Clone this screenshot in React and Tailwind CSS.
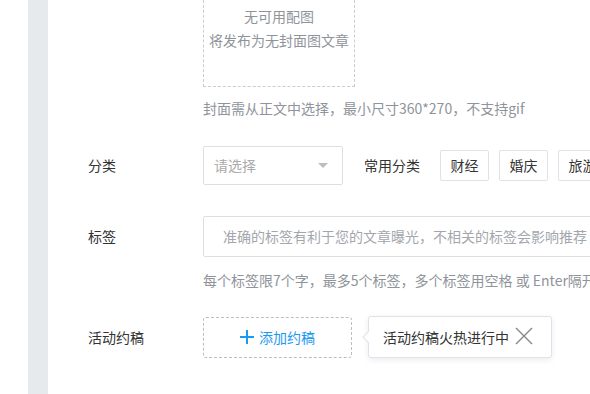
import React from "react";

const font = { fontFamily: '"Noto Sans CJK SC", "Noto Sans", sans-serif' };

function Row({ label, children, className = "" }) {
  return (
    <div className={`flex items-center ${className}`}>
      <div className="w-[115px] shrink-0 text-[14px] text-[#333]">{label}</div>
      {children}
    </div>
  );
}

export default function App() {
  const quick = ["财经", "婚庆", "旅游"];

  return (
    <div className="flex h-[394px] w-[590px] overflow-hidden bg-white" style={font}>
      <div className="w-[28px] shrink-0 bg-white" />
      <div className="w-[20px] shrink-0 bg-[#e7eaed]" />
      <div className="flex min-w-0 flex-1 flex-col pl-[40px]">
        {/* cover */}
        <div className="flex flex-col pl-[115px]">
          <div className="flex h-[87px] w-[152px] shrink-0 flex-col items-center border border-t-0 border-dashed border-[#c9cdd2] pt-[4px] text-[14px] leading-[24px] text-[#8f949b]">
            <span>无可用配图</span>
            <span>将发布为无封面图文章</span>
          </div>
          <p className="mt-[11px] whitespace-nowrap text-[14px] leading-[20px] text-[#8f949b]">
            封面需从正文中选择，最小尺寸360*270，不支持gif
          </p>
        </div>

        {/* category */}
        <Row label="分类" className="mt-[28px]">
          <div className="flex h-[39px] w-[140px] shrink-0 items-center justify-between rounded-[2px] border border-[#dcdfe4] pl-[10px] pr-[14px]">
            <span className="text-[14px] text-[#aaa]">请选择</span>
            <span className="h-0 w-0 border-x-[5px] border-t-[5px] border-x-transparent border-t-[#bdbdbd]" />
          </div>
          <span className="ml-[21px] shrink-0 text-[14px] text-[#333]">常用分类</span>
          <div className="ml-[20px] flex shrink-0 gap-[10px]">
            {quick.map((q) => (
              <div
                key={q}
                className="flex h-[31px] w-[49px] shrink-0 items-center justify-center rounded-[2px] border border-[#dfe2e6] text-[14px] text-[#333]"
              >
                {q}
              </div>
            ))}
          </div>
        </Row>

        {/* tags */}
        <Row label="标签" className="mt-[31px]">
          <div className="flex h-[41px] w-[420px] shrink-0 items-center rounded-[2px] border border-[#dcdfe4] pl-[19px]">
            <span className="whitespace-nowrap text-[14px] text-[#a3a7ad]">
              准确的标签有利于您的文章曝光，不相关的标签会影响推荐
            </span>
          </div>
        </Row>
        <p className="mt-[13px] whitespace-nowrap pl-[115px] text-[14px] leading-[20px] text-[#8f949b]">
          每个标签限7个字，最多5个标签，多个标签用空格 或 Enter隔开
        </p>

        {/* activity */}
        <Row label="活动约稿" className="mt-[26px]">
          <div className="flex h-[41px] w-[149px] shrink-0 items-center justify-center gap-[5px] rounded-[3px] border border-dashed border-[#b9bec5] text-[14px] text-[#1a9bf0]">
            <svg width="14" height="14" viewBox="0 0 14 14">
              <path d="M7 0v14M0 7h14" stroke="#1a9bf0" strokeWidth="2" />
            </svg>
            <span>添加约稿</span>
          </div>
          <div className="relative ml-[16px] flex h-[42px] w-[184px] shrink-0 items-center rounded-[3px] border border-[#dde3ea] bg-white pl-[14px] shadow-[0_2px_6px_rgba(0,0,0,0.08)]">
            <span className="absolute left-[-5px] top-[16px] h-[8px] w-[8px] rotate-45 border-b border-l border-[#dde3ea] bg-white" />
            <span className="whitespace-nowrap text-[14px] text-[#333]">活动约稿火热进行中</span>
            <svg className="absolute left-[146px] top-[10px]" width="18" height="18" viewBox="0 0 18 18">
              <path d="M1 1l16 16M17 1L1 17" stroke="#888" strokeWidth="1.4" />
            </svg>
          </div>
        </Row>
      </div>
    </div>
  );
}
